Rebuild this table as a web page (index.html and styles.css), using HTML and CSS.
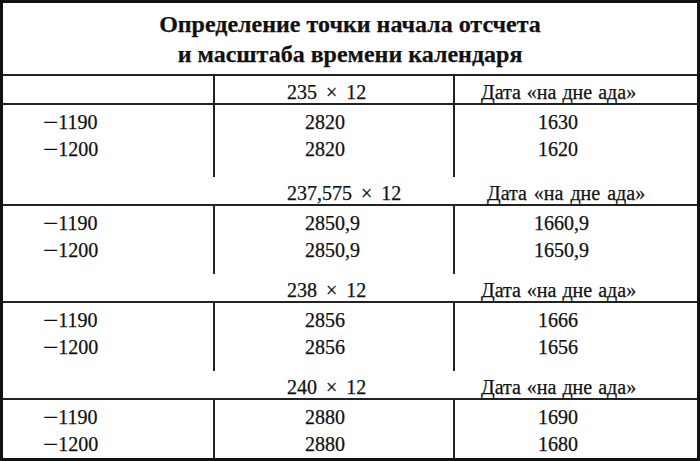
FILE: index.html
```html
<!DOCTYPE html>
<html lang="ru">
<head>
<meta charset="utf-8">
<title>Определение точки начала отсчета</title>
<link rel="stylesheet" href="styles.css">
</head>
<body>
<div class="sheet">
  <div class="title">
    <div>Определение точки начала отсчета</div>
    <div>и масштаба времени календаря</div>
  </div>

  <div class="head head--ruled">
    <div class="c1"></div>
    <div class="c2">235 × 12</div>
    <div class="c3">Дата «на дне ада»</div>
  </div>
  <div class="data data--g1">
    <div class="c1"><div><span class="neg">−</span>1190</div><div><span class="neg">−</span>1200</div></div>
    <div class="c2"><div>2820</div><div>2820</div></div>
    <div class="c3"><div>1630</div><div>1620</div></div>
  </div>

  <div class="head">
    <div class="c1"></div>
    <div class="c2">237,575 × 12</div>
    <div class="c3 c3--wide">Дата «на дне ада»</div>
  </div>
  <div class="data data--g2">
    <div class="c1"><div><span class="neg">−</span>1190</div><div><span class="neg">−</span>1200</div></div>
    <div class="c2"><div>2850,9</div><div>2850,9</div></div>
    <div class="c3"><div class="shift">1660,9</div><div class="shift">1650,9</div></div>
  </div>

  <div class="head">
    <div class="c1"></div>
    <div class="c2">238 × 12</div>
    <div class="c3">Дата «на дне ада»</div>
  </div>
  <div class="data data--g3">
    <div class="c1"><div><span class="neg">−</span>1190</div><div><span class="neg">−</span>1200</div></div>
    <div class="c2"><div>2856</div><div>2856</div></div>
    <div class="c3"><div>1666</div><div>1656</div></div>
  </div>

  <div class="head">
    <div class="c1"></div>
    <div class="c2">240 × 12</div>
    <div class="c3">Дата «на дне ада»</div>
  </div>
  <div class="data data--g4">
    <div class="c1"><div><span class="neg">−</span>1190</div><div><span class="neg">−</span>1200</div></div>
    <div class="c2"><div>2880</div><div>2880</div></div>
    <div class="c3"><div>1690</div><div>1680</div></div>
  </div>
</div>
</body>
</html>
```

FILE: styles.css
```css
* { box-sizing: border-box; }
html, body { margin: 0; padding: 0; background: #fff; }
body {
  font-family: "Liberation Serif", "Times New Roman", serif;
  font-size: 20px;
  color: #111;
  -webkit-text-stroke: 0.25px #111;
}
.sheet {
  width: 700px;
  height: 461px;
  border: 3px solid #111;
  overflow: hidden;
}
.title {
  padding: 6px 0 5px;
  text-align: center;
  font-weight: bold;
  font-size: 24px;
  line-height: 30px;
  border-bottom: 2px solid #222;
}
.head, .data {
  display: grid;
  grid-template-columns: 210px 240px 244px;
}
.head {
  height: 29px;
  line-height: 22px;
  border-bottom: 2px solid #222;
}
.head > div {
  display: flex;
  align-items: flex-end;
  border-left: 2px solid transparent;
}
.head > .c1 { border-left: 0; }
.head--ruled > .c2, .head--ruled > .c3 { border-left-color: #222; }
.head > .c2 { padding-left: 72px; word-spacing: 4px; }
.head > .c3 { padding-left: 26px; word-spacing: 1px; }
.head > .c3--wide { padding-left: 32px; word-spacing: 2px; }

.data { line-height: 27px; }
.data > div { padding-top: 4px; }
.data > .c1 { padding-left: 40px; }
.data > .c2 { border-left: 2px solid #222; padding-left: 90px; }
.data > .c3 { border-left: 2px solid #222; padding-left: 83px; }
.data .shift { margin-left: -4px; }
.neg {
  display: inline-block;
  transform: scaleX(1.35);
  transform-origin: left center;
  margin-right: 4px;
}
.data--g1 { height: 72px; }
.data--g2 { height: 68px; }
.data--g3 { height: 68px; }
.data--g4 { height: 58px; }
```
